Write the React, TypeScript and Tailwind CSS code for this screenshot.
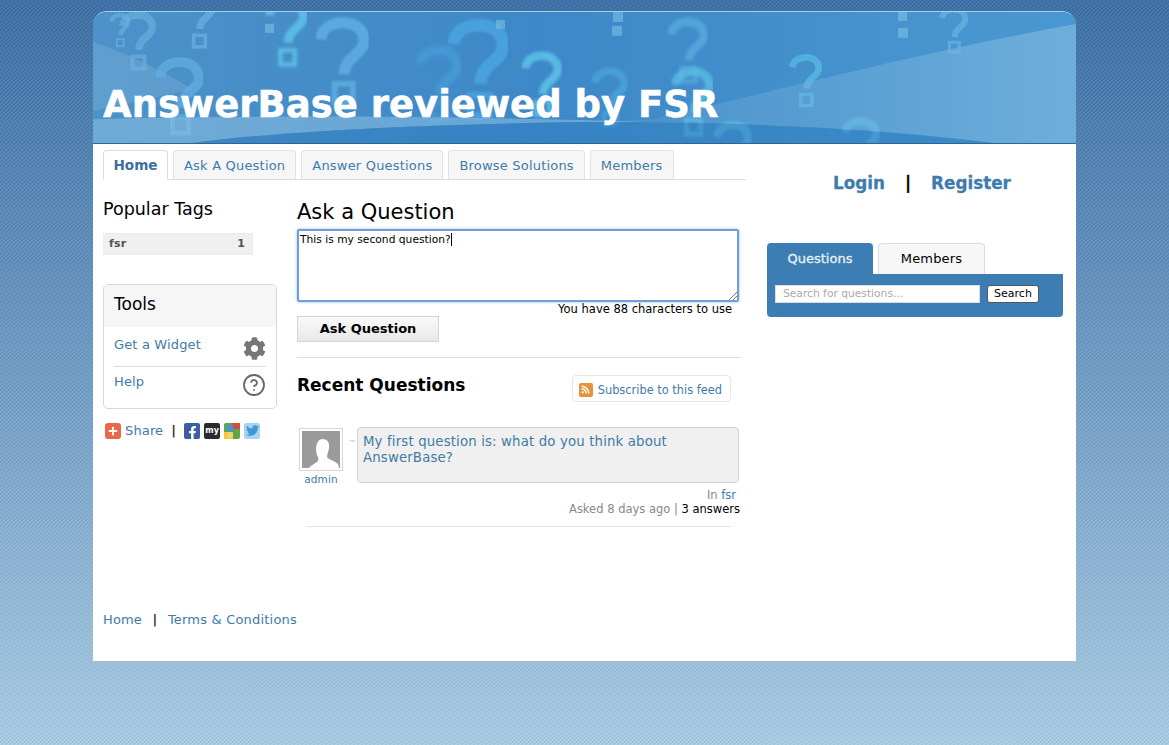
import { CircleHelp } from "lucide-react";
import { FaCog, FaFacebookF, FaPlus, FaRss, FaTwitter } from "react-icons/fa";

const tabs = ["Ask A Question", "Answer Questions", "Browse Solutions", "Members"];

// question marks drawn into the banner image: x, y, scale, colour, opacity, blurred
const marks: [number, number, number, string, number, boolean][] = [
  [16, 2, 0.55, "#6db5e2", 0.6, false],
  [26, 1, 0.95, "#6db5e2", 0.6, false],
  [88, -18, 0.9, "#6db5e2", 0.65, false],
  [62, 48, 1.25, "#66b4e6", 0.6, false],
  [172, -12, 1.1, "#5cc0e6", 0.9, true],
  [222, 8, 1.4, "#62b2e6", 0.75, false],
  [322, 36, 1.2, "#4a9fdc", 0.7, true],
  [354, 10, 1.6, "#4ba6e2", 0.8, false],
  [428, 42, 1.05, "#5cc0e6", 0.9, true],
  [498, 58, 0.95, "#49a4de", 0.8, true],
  [574, 8, 1.05, "#5aaee0", 0.7, true],
  [578, 58, 1.1, "#5cc0e6", 0.75, true],
  [696, 44, 0.85, "#5cc0e6", 0.65, false],
  [620, 112, 1, "#5cc0e6", 0.7, true],
  [748, 108, 1, "#5cc0e6", 0.7, true],
  [846, -4, 0.75, "#6db5e2", 0.65, false],
];

// loose square dots left over from marks cut off at the banner edge
const dots: [number, number, number][] = [
  [519, 14, 10],
  [520, 0, 10],
  [403, 8, 9],
  [805, 16, 10],
  [805, 0, 9],
  [172, 12, 9],
];

function BannerArt() {
  return (
    <svg className="absolute inset-0 h-full w-full" viewBox="0 0 983 132" preserveAspectRatio="none">
      <defs>
        <linearGradient id="sky" x1="0" y1="0" x2="1" y2="0">
          <stop offset="0" stopColor="#4d92c9" />
          <stop offset="0.45" stopColor="#3d88c8" />
          <stop offset="1" stopColor="#4a98d1" />
        </linearGradient>
        <linearGradient id="wedge" x1="0" y1="0" x2="1" y2="0">
          <stop offset="0" stopColor="#7ab5dc" stopOpacity="0.1" />
          <stop offset="0.6" stopColor="#7ab5dc" stopOpacity="0.45" />
          <stop offset="1" stopColor="#7ab5dc" stopOpacity="0.75" />
        </linearGradient>
        <filter id="soft">
          <feGaussianBlur stdDeviation="1.6" />
        </filter>
        <filter id="slight">
          <feGaussianBlur stdDeviation="0.6" />
        </filter>
      </defs>
      <rect width="983" height="132" fill="url(#sky)" />
      <path d="M0 30 C 40 44 70 60 100 78 L0 100 Z" fill="#8cbbdc" opacity="0.3" />
      {marks.map(([x, y, s, c, o, soft], i) => (
        <g key={i} transform={`translate(${x} ${y}) scale(${s})`} opacity={o} filter={soft ? "url(#soft)" : "url(#slight)"}>
          <path d="M4 14 C5 5 13 2 20 2 C30 2 35 8 35 15 C35 25 21 26 21 39" fill="none" stroke={c} strokeWidth="8" />
          <rect x="14" y="46" width="13" height="13" fill="none" stroke={c} strokeWidth="4" />
        </g>
      ))}
      {dots.map(([x, y, s], i) => (
        <rect key={i} x={x} y={y} width={s} height={s} fill="#7cc0e6" opacity="0.6" filter="url(#slight)" />
      ))}
      <path d="M560 108 C 680 80 830 40 983 12 L983 132 L900 132 C 800 118 650 110 480 112 Z" fill="url(#wedge)" />
      <path d="M0 108 C 150 104 350 104 560 111 C 400 110 200 118 100 132 L0 132 Z" fill="#93c4e3" opacity="0.5" />
      <path d="M100 132 C 200 118 400 110 560 111 C 680 112 800 120 900 132 Z" fill="#2f7dbc" opacity="0.45" />
    </svg>
  );
}

function Avatar() {
  return (
    <div className="border border-[#d8d8d8] p-[2px]">
      <svg width="38" height="37" viewBox="0 0 38 37" className="block">
        <rect width="38" height="37" fill="#9b9b9b" />
        <path d="M20 8 C 25 8 28 11 27 17 C 26.5 21 25 23 25 26 C 27 29 33 30 36 33 L37 37 L7 37 C 9 34 14 32 16 30 C 17 28 16 26 15 24 C 13 18 14 9 20 8 Z" fill="#fff" />
      </svg>
    </div>
  );
}

export default function App() {
  return (
    <div className="min-h-[745px] font-['DejaVu_Sans',sans-serif] text-[13px] tracking-[0.15px] text-black bg-[repeating-linear-gradient(135deg,rgba(255,255,255,0.06)_0px,rgba(255,255,255,0.06)_1.414px,rgba(0,0,0,0.04)_1.414px,rgba(0,0,0,0.04)_2.828px),linear-gradient(180deg,#3a6fa5_0%,#6f9cc5_50%,#a9cce4_100%)] pl-[93px] pt-[11px]">
      <div className="w-[983px]">
        {/* banner */}
        <div className="relative h-[133px] overflow-hidden rounded-t-[14px] border-t border-b border-t-[#9fd0ee] border-b-[#2c6695]">
          <BannerArt />
          <h1 className="absolute left-[10px] top-[71px] text-[37px] leading-[44px] font-bold tracking-normal text-white [-webkit-text-stroke:0.5px_white]">AnswerBase reviewed by FSR</h1>
        </div>

        <div className="flex h-[517px] bg-white">
          {/* left + centre */}
          <div className="flex w-[653px] flex-col pl-[10px]">
            <div className="mt-[6px] flex h-[30px] items-end gap-[5px] border-b border-[#dcdcdc]">
              <div className="relative top-px flex h-[30px] w-[65px] items-center justify-center rounded-t border border-b-0 border-[#dcdcdc] bg-white text-[13.6px] font-bold tracking-normal text-[#3d6f9e]">Home</div>
              {tabs.map((t) => (
                <div key={t} className="flex h-[29px] items-center rounded-t border border-b-0 border-[#e2e2e2] bg-[#f6f6f6] px-[10px] pt-[1px] tracking-[0.2px] text-[#3e7ba8]">
                  {t}
                </div>
              ))}
            </div>

            <div className="flex flex-1">
              {/* sidebar */}
              <div className="flex w-[194px] flex-col">
                <h3 className="mt-[17px] text-[17.5px] leading-[24px] tracking-normal">Popular Tags</h3>
                <div className="mt-[12px] flex h-[22px] w-[150px] items-center justify-between border border-[#ececec] bg-[#f0f0f0] px-[5px] text-[11px] font-bold text-[#555]">
                  <span>fsr</span>
                  <span className="pr-[2px]">1</span>
                </div>
                <div className="mt-[29px] w-[174px] overflow-hidden rounded-[5px] border border-[#d9d9d9]">
                  <div className="flex h-[42px] items-center bg-[#f6f6f6] px-[10px] pb-[3px] text-[17px] tracking-normal">Tools</div>
                  <div className="mx-[10px] flex h-[40px] items-center justify-between border-b border-[#dcdcdc] text-[#3e7ba8]">
                    <span className="relative -top-[2px]">Get a Widget</span>
                    <FaCog className="relative top-[2px] text-[23px] text-[#777]" />
                  </div>
                  <div className="mx-[10px] flex h-[41px] items-center justify-between text-[#3e7ba8]">
                    <span className="relative -top-[6px]">Help</span>
                    <CircleHelp className="relative -top-[3px] h-[24px] w-[24px] text-[#666]" strokeWidth={1.8} />
                  </div>
                </div>
                <div className="mt-[12px] flex items-center pl-[2px] text-[#3e7ba8]">
                  <span className="flex h-[16px] w-[16px] items-center justify-center rounded-[3px] bg-[#e8694a] text-[10px] text-white">
                    <FaPlus />
                  </span>
                  <span className="ml-[4px]">Share</span>
                  <span className="mx-[8px] font-bold text-[#333]">|</span>
                  <span className="flex gap-[4px]">
                    <span className="flex h-[16px] w-[16px] items-end justify-end rounded-[2px] bg-[#3b5fa0] pr-[1px] text-[13px] text-white">
                      <FaFacebookF />
                    </span>
                    <span className="flex h-[16px] w-[16px] items-center justify-center rounded-[2px] bg-[#2b2b2b] text-[8px] font-bold text-white">my</span>
                    <svg width="16" height="16" viewBox="0 0 16 16">
                      <rect width="16" height="16" rx="2" fill="#5aa845" />
                      <rect x="8" width="8" height="6" fill="#d9483b" />
                      <rect y="9" width="9" height="7" fill="#f4c542" />
                      <circle cx="6" cy="5" r="3.4" fill="#4a8fe0" />
                      <circle cx="6" cy="12" r="3" fill="#f4d26a" />
                    </svg>
                    <span className="flex h-[16px] w-[16px] items-center justify-center rounded-[2px] bg-[#a9d4ee] text-[13px] text-[#3f97d6]">
                      <FaTwitter />
                    </span>
                  </span>
                </div>
                <div className="mt-auto mb-[32px] flex items-center text-[#3e7ba8]">
                  <span>Home</span>
                  <span className="mx-[10.5px] font-bold text-[#333]">|</span>
                  <span className="whitespace-nowrap tracking-[0.2px]">Terms &amp; Conditions</span>
                </div>
              </div>

              {/* centre */}
              <div className="flex w-[449px] flex-col">
                <h2 className="mt-[18px] text-[21px] leading-[28px] tracking-normal">Ask a Question</h2>
                <div className="relative mt-[3px] h-[73px] w-[442px] rounded-[2px] border-2 border-[#6f9fd4] pt-[1px] pl-[1px] text-[10.7px] leading-[16px] tracking-normal shadow-[0_0_3px_#8db6e2]">
                  <span className="border-r border-black">This is my second question?</span>
                  <svg width="9" height="9" viewBox="0 0 9 9" className="absolute right-0 bottom-0">
                    <path d="M1 9 L9 1 M5 9 L9 5" stroke="#777" strokeWidth="1" />
                  </svg>
                </div>
                <div className="w-[435px] text-right text-[11.5px] leading-[14px] tracking-normal">You have 88 characters to use</div>
                <button className="h-[26px] w-[142px] border border-[#d4d4d4] bg-[linear-gradient(180deg,#fafafa,#e8e8e8)] text-[13px] font-bold tracking-normal">Ask Question</button>
                <div className="mt-[15px] w-[444px] border-t border-[#dcdcdc]" />
                <div className="mt-[17px] flex w-[434px] items-start justify-between">
                  <h2 className="-mt-px text-[17px] leading-[22px] font-bold tracking-normal">Recent Questions</h2>
                  <div className="flex h-[27px] items-center gap-[5px] rounded-[4px] border border-[#e6e6e6] pr-[8px] pl-[6px] text-[11.4px] tracking-normal text-[#3e7ba8]">
                    <span className="relative top-[1px] flex h-[14px] w-[14px] items-center justify-center rounded-[2px] bg-[#e8923a] text-[9px] text-white">
                      <FaRss />
                    </span>
                    <span className="relative top-[2px]">Subscribe to this feed</span>
                  </div>
                </div>
                <div className="mt-[25px] flex items-start">
                  <div className="mt-[1px] ml-[1px] flex w-[46px] flex-col items-center">
                    <Avatar />
                    <span className="mt-[1px] text-[10.5px] leading-[14px] text-[#3e7ba8]">admin</span>
                  </div>
                  <span className="relative w-[13px] pt-[10px] pl-[5px] text-[8px] leading-[10px] text-[#bbb]">~</span>
                  <div className="h-[56px] w-[382px] rounded-[4px] border border-[#d2d2d2] bg-[#f0f0f0] px-[5px] pt-[6px] text-[13.3px] leading-[16px] text-[#3e7ba8]">My first question is: what do you think about AnswerBase?</div>
                </div>
                <div className="mt-[2px] w-[439px] text-right text-[11.5px] leading-[14px] tracking-normal text-[#3e7ba8]">
                  <span className="text-[#888]">In</span> fsr
                </div>
                <div className="w-[443px] text-right text-[11.5px] leading-[14px] tracking-normal text-[#888]">
                  Asked 8 days ago | <span className="text-black">3 answers</span>
                </div>
                <div className="mt-[10px] ml-[9px] w-[425px] border-t border-[#e4e4e4]" />
              </div>
            </div>
          </div>

          {/* right column */}
          <div className="flex flex-1 flex-col pl-[21px]">
            <div className="mt-[27px] flex items-center pl-[66px] text-[16.8px] leading-[24px] font-bold tracking-normal text-[#3e7cb0] [-webkit-text-stroke:0.3px_#3e7cb0]">
              <span>Login</span>
              <span className="mx-[20px] text-black [-webkit-text-stroke:0.3px_black]">|</span>
              <span>Register</span>
            </div>
            <div className="mt-[48px] flex items-end gap-[5px]">
              <div className="flex h-[31px] w-[106px] items-center justify-center rounded-t-[4px] bg-[#3c7db3] tracking-normal text-[#e8f2fa] [-webkit-text-stroke:0.3px_#e8f2fa]">Questions</div>
              <div className="flex h-[31px] w-[107px] items-center justify-center rounded-t-[4px] border border-b-0 border-[#dcdcdc] bg-[#f7f7f7]">Members</div>
            </div>
            <div className="flex h-[43px] w-[296px] items-start gap-[7px] rounded-b-[4px] bg-[#3c7db3] pl-[8px] pt-[11px]">
              <div className="flex h-[18px] w-[205px] items-center border border-[#ddd] bg-white pt-[1px] pl-[7px] text-[10.7px] tracking-normal text-[#aaa]">Search for questions...</div>
              <div className="flex h-[18px] w-[52px] items-center justify-center rounded-[3px] border border-[#555] bg-white pt-[1px] text-[11px] tracking-normal">Search</div>
            </div>
          </div>
        </div>
      </div>
    </div>
  );
}
